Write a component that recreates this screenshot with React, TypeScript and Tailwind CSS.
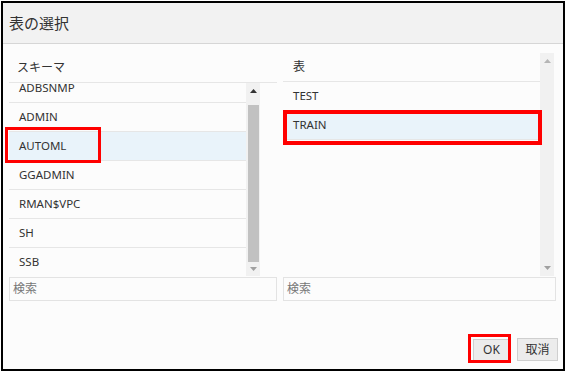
import React from 'react';

const font = { fontFamily: '"Noto Sans", "Noto Sans CJK JP", sans-serif' };

const schemas = ['ADBSNMP', 'ADMIN', 'AUTOML', 'GGADMIN', 'RMAN$VPC', 'SH', 'SSB'];
const tables = ['TEST', 'TRAIN'];

const UpArrow = ({ color }: { color: string }) => (
  <svg width="7" height="4" viewBox="0 0 7 4">
    <path d="M0 4 L3.5 0 L7 4 Z" fill={color} />
  </svg>
);

const DownArrow = ({ color }: { color: string }) => (
  <svg width="7" height="4" viewBox="0 0 7 4">
    <path d="M0 0 L7 0 L3.5 4 Z" fill={color} />
  </svg>
);

const App: React.FC = () => {
  return (
    <div className="w-[566px] h-[373px] bg-white pt-[1px] pl-[1px]" style={font}>
      <div className="relative w-[564px] h-[370px] border-2 border-black bg-[#fcfcfc] flex flex-col text-[#333]">
        {/* Header */}
        <div className="h-[41px] bg-[#f2f2f2] border-b border-[#d6d6d6] flex items-center pl-[6px] text-[15px] shrink-0">
          表の選択
        </div>

        {/* Body */}
        <div className="flex gap-[6px] pl-[6px] pt-[9px]">
          {/* Schema column */}
          <div className="w-[268px] flex flex-col">
            <div className="h-[29px] flex items-center pl-2 text-[12px]">スキーマ</div>
            <div className="h-[194px] flex border-t border-[#e6e6e6]">
              <div className="w-[237px] overflow-hidden">
                <div className="-mt-[9px]">
                  {schemas.map((s) => (
                    <div
                      key={s}
                      className={`h-[29px] flex items-center pl-[10px] text-[11.5px] border-b border-[#e6e6e6] ${
                        s === 'AUTOML' ? 'bg-[#e9f3fa]' : ''
                      }`}
                    >
                      {s}
                    </div>
                  ))}
                </div>
              </div>
              <div className="w-[14px] bg-[#f1f1f1] flex flex-col items-center">
                <div className="h-[16px] flex items-center justify-center">
                  <UpArrow color="#333" />
                </div>
                <div className="w-[11px] h-[157px] mt-[6px] bg-[#c1c1c1]" />
                <div className="flex-1 flex items-center justify-center">
                  <DownArrow color="#a0a0a0" />
                </div>
              </div>
            </div>
            <div className="mt-[1px] h-[24px] border border-[#e3e3e3] bg-[#fcfcfc] flex items-center pl-[3px] text-[12px] text-[#777]">
              検索
            </div>
          </div>

          {/* Table column */}
          <div className="w-[273px] flex flex-col">
            <div className="h-[223px] w-[271px] flex">
              <div className="w-[257px]">
                <div className="h-[29px] flex items-center pl-[10px] text-[12px] border-b border-[#e6e6e6]">表</div>
                {tables.map((t) => (
                  <div
                    key={t}
                    className={`h-[29px] flex items-center pl-[10px] text-[11.5px] border-b border-[#e6e6e6] ${
                      t === 'TRAIN' ? 'bg-[#e9f3fa]' : ''
                    }`}
                  >
                    {t}
                  </div>
                ))}
              </div>
              <div className="w-[14px] bg-[#f1f1f1] flex flex-col items-center justify-between py-[6px]">
                <UpArrow color="#b5b5b5" />
                <DownArrow color="#a0a0a0" />
              </div>
            </div>
            <div className="mt-[1px] h-[24px] border border-[#e3e3e3] bg-[#fcfcfc] flex items-center pl-[3px] text-[12px] text-[#777]">
              検索
            </div>
          </div>
        </div>

        {/* Footer buttons */}
        <div className="mt-auto flex justify-end items-center gap-[7px] pr-[5px] pb-[8px]">
          <div className="w-[37px] h-[22px] bg-[#ececec] border border-[#cfcfcf] flex items-center justify-center text-[12px]">
            OK
          </div>
          <div className="w-[41px] h-[23px] bg-[#ececec] border border-[#cfcfcf] flex items-center justify-center text-[12px]">
            取消
          </div>
        </div>

        {/* Annotation boxes */}
        <div className="absolute left-[2px] top-[124px] w-[96px] h-[36px] border-[3px] border-[#ff0000]" />
        <div className="absolute left-[280px] top-[107px] w-[259px] h-[35px] border-4 border-[#ff0000]" />
        <div className="absolute left-[465px] top-[331px] w-[43px] h-[29px] border-[3px] border-[#ff0000]" />
      </div>
    </div>
  );
};

export default App;
